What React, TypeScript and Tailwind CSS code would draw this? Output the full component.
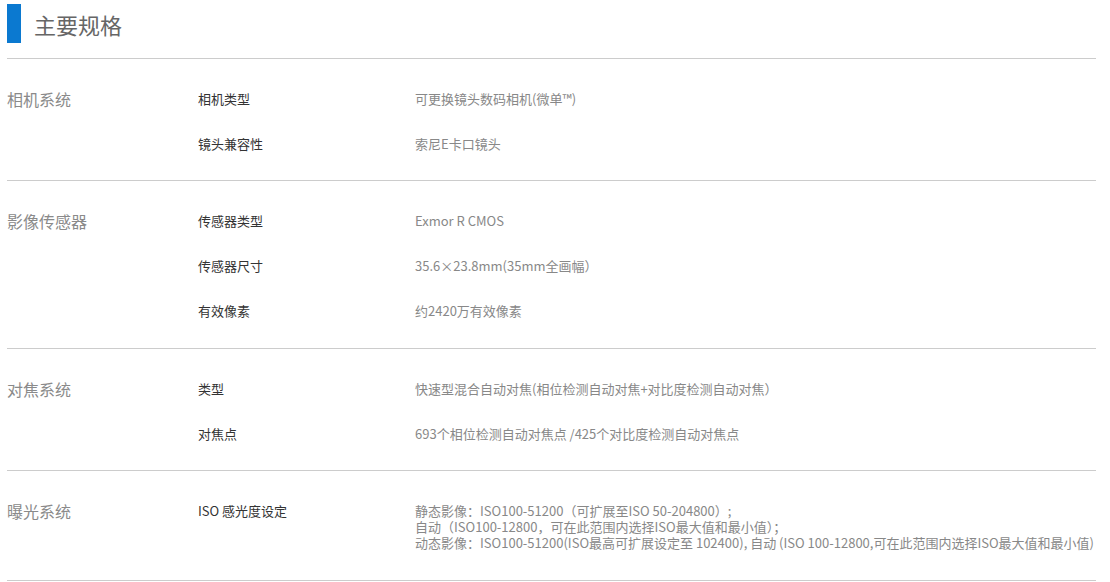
import React from "react";

type Row = { label: string; value: string[] };
type Section = { title: string; rows: Row[]; pb: string };

const sections: Section[] = [
  {
    title: "相机系统",
    pb: "pb-[26px]",
    rows: [
      { label: "相机类型", value: ["可更换镜头数码相机(微单™)"] },
      { label: "镜头兼容性", value: ["索尼E卡口镜头"] },
    ],
  },
  {
    title: "影像传感器",
    pb: "pb-[27px]",
    rows: [
      { label: "传感器类型", value: ["Exmor R CMOS"] },
      { label: "传感器尺寸", value: ["35.6×23.8mm(35mm全画幅）"] },
      { label: "有效像素", value: ["约2420万有效像素"] },
    ],
  },
  {
    title: "对焦系统",
    pb: "pb-[26px]",
    rows: [
      { label: "类型", value: ["快速型混合自动对焦(相位检测自动对焦+对比度检测自动对焦）"] },
      { label: "对焦点", value: ["693个相位检测自动对焦点 /425个对比度检测自动对焦点"] },
    ],
  },
  {
    title: "曝光系统",
    pb: "pb-[29px]",
    rows: [
      {
        label: "ISO 感光度设定",
        value: [
          "静态影像：ISO100-51200（可扩展至ISO 50-204800）;",
          "自动（ISO100-12800，可在此范围内选择ISO最大值和最小值）；",
          "动态影像：ISO100-51200(ISO最高可扩展设定至 102400), 自动 (ISO 100-12800,可在此范围内选择ISO最大值和最小值)",
        ],
      },
    ],
  },
];

export default function App() {
  return (
    <div
      className="w-[1110px] h-[582px] bg-white overflow-hidden pl-[7px] pr-[14px]"
      style={{ fontFamily: '"Microsoft YaHei", "Noto Sans CJK SC", "Noto Sans", sans-serif' }}
    >
      <div className="flex items-center h-[59px] border-b border-[#cccccc] pt-[4px] pb-[15px]">
        <div className="w-[14px] h-[39px] bg-[#0b79d0]" />
        <h1 className="ml-[13px] text-[22px] leading-[30px] text-[#666666]">主要规格</h1>
      </div>
      {sections.map((s) => (
        <div key={s.title} className={`flex border-b border-[#cccccc] pt-[30px] ${s.pb}`}>
          <div className="w-[191px] shrink-0 text-[16px] leading-[20px] text-[#8a8a8a]">{s.title}</div>
          <div className="flex flex-col gap-[25px] flex-1">
            {s.rows.map((r) => (
              <div key={r.label} className="flex items-start">
                <div className="w-[217px] shrink-0 text-[13px] leading-[20px] text-[#333333]">{r.label}</div>
                <div className={`text-[13px] text-[#888888] whitespace-nowrap ${r.value.length > 1 ? "leading-[16px] pt-[2px]" : "leading-[20px]"}`}>
                  {r.value.map((v, i) => (
                    <div key={i}>{v}</div>
                  ))}
                </div>
              </div>
            ))}
          </div>
        </div>
      ))}
    </div>
  );
}
